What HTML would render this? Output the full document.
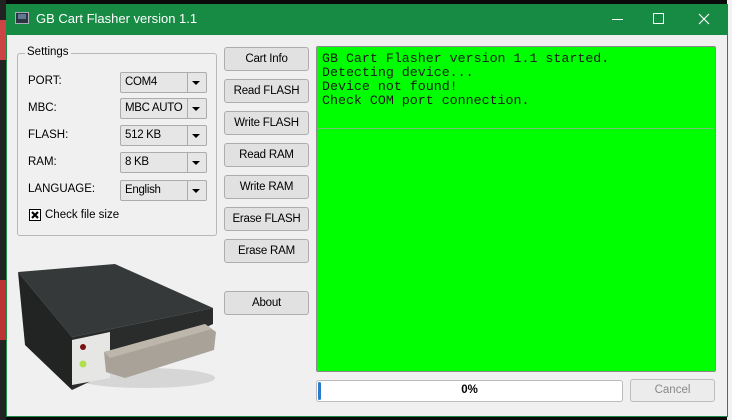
<!DOCTYPE html>
<html><head><meta charset="utf-8"><style>
*{box-sizing:border-box;margin:0;padding:0}
body{width:732px;height:420px;overflow:hidden;background:#0a0a0a;position:relative;font-family:"Liberation Sans",sans-serif;font-size:11.5px;color:#000}
.a{position:absolute}
.win{left:6px;top:4px;width:722px;height:413px;background:#f0f0f0;border:1px solid #1e8a46}
.title{left:6px;top:4px;width:722px;height:31px;background:#178a44;color:#fff;font-size:13px}
.btn{position:absolute;left:224px;width:85px;height:24px;background:#e1e1e1;border:1px solid #adadad;border-radius:3px;text-align:center;line-height:22px;font-size:11.5px;letter-spacing:-0.2px}
.lbl{position:absolute;left:28px;font-size:11.5px}
.cb{position:absolute;left:120px;width:87px;height:21px;background:#e6e6e6;border:1px solid #acacac;border-radius:2px;padding-left:4px;line-height:19px;font-size:11.5px;letter-spacing:-0.3px;white-space:nowrap;overflow:hidden}
.cb:after{content:"";position:absolute;left:66px;top:0;width:1px;height:19px;background:#acacac}
.cb:before{content:"";position:absolute;right:6px;top:8px;border-left:4px solid transparent;border-right:4px solid transparent;border-top:4px solid #000}
</style></head><body>
<div class="a" style="left:0;top:0;width:6px;height:420px;background:#222"></div>
<div class="a" style="left:0;top:20px;width:6px;height:40px;background:#c44"></div>
<div class="a" style="left:0;top:280px;width:6px;height:60px;background:#b33"></div>
<div class="a" style="left:727px;top:0;width:5px;height:420px;background:#f2f2f2"></div>
<div class="a win"></div>
<div class="a title">
 <div class="a" style="left:9px;top:8px;width:14px;height:12px;background:#2b3640;border:1px solid #aab"></div>
 <div class="a" style="left:12px;top:10px;width:8px;height:5px;background:#607890"></div>
 <div class="a" style="left:30px;top:7px;font-size:13px">GB Cart Flasher version 1.1</div>
 <div class="a" style="left:606px;top:15px;width:11px;height:1px;background:#fff"></div>
 <div class="a" style="left:647px;top:9px;width:11px;height:11px;border:1px solid #fff"></div>
 <svg class="a" style="left:692px;top:9px" width="12" height="12"><path d="M1 1L11 11M11 1L1 11" stroke="#fff" stroke-width="1.2"/></svg>
</div>
<div class="a" style="left:17px;top:53px;width:200px;height:183px;border:1px solid #b8b8b8;border-radius:3px"></div>
<div class="a" style="left:25px;top:46px;background:#f0f0f0;padding:0 2px">Settings</div>
<div class="lbl" style="top:75px">PORT:</div><div class="cb" style="top:72px">COM4</div>
<div class="lbl" style="top:102px">MBC:</div><div class="cb" style="top:98px">MBC AUTO</div>
<div class="lbl" style="top:129px">FLASH:</div><div class="cb" style="top:125px">512 KB</div>
<div class="lbl" style="top:156px">RAM:</div><div class="cb" style="top:152px">8 KB</div>
<div class="lbl" style="top:183px">LANGUAGE:</div><div class="cb" style="top:180px">English</div>
<div class="a" style="left:29px;top:209px;width:12px;height:12px;border:1px solid #000;background:#fff"></div>
<svg class="a" style="left:29px;top:209px" width="12" height="12"><path d="M3 3L9 9M9 3L3 9" stroke="#000" stroke-width="2.2"/></svg>
<div class="a" style="left:45px;top:209px">Check file size</div>
<div class="btn" style="top:47px">Cart Info</div>
<div class="btn" style="top:79px">Read FLASH</div>
<div class="btn" style="top:111px">Write FLASH</div>
<div class="btn" style="top:143px">Read RAM</div>
<div class="btn" style="top:175px">Write RAM</div>
<div class="btn" style="top:207px">Erase FLASH</div>
<div class="btn" style="top:239px">Erase RAM</div>
<div class="btn" style="top:291px">About</div>
<svg class="a" style="left:0;top:240px" width="222" height="170">
 <ellipse cx="145" cy="138" rx="70" ry="10" fill="#d6d6d6"/>
 <polygon points="18,32 115,24 213,68 72,97" fill="#363939"/>
 <polygon points="18,32 72,97 72,150 25,105" fill="#222424"/>
 <polygon points="72,97 213,68 213,84 72,150" fill="#2a2c2c"/>
 <polygon points="72,100 110,92 110,138 72,145" fill="#e6e6e4"/>
 <circle cx="83" cy="107" r="3" fill="#7a1010"/>
 <circle cx="83" cy="124" r="3.5" fill="#aee04a"/>
 <polygon points="104,112 205,84 216,92 214,110 125,138 106,132" fill="#a8a298"/>
 <polygon points="104,112 205,84 212,89 110,118" fill="#bcb6ab"/>
</svg>
<div class="a" style="left:316px;top:46px;width:400px;height:326px;background:#00ff00;border:1px solid #8a8a8a;border-radius:2px"></div>
<div class="a" style="left:318px;top:128px;width:396px;height:1px;background:#7ac07a"></div>
<pre class="a" style="left:322px;top:52px;font-family:'Liberation Mono',monospace;font-size:13.3px;line-height:14px;color:#1a1a1a">GB Cart Flasher version 1.1 started.
Detecting device...
Device not found!
Check COM port connection.</pre>
<div class="a" style="left:316px;top:380px;width:307px;height:22px;background:#fff;border:1px solid #bcbcbc;border-radius:3px"></div>
<div class="a" style="left:318px;top:382px;width:3px;height:18px;background:#2a7ad0;border-radius:2px"></div>
<div class="a" style="left:316px;top:384px;width:307px;text-align:center;font-weight:bold">0%</div>
<div class="a" style="left:630px;top:379px;width:85px;height:23px;background:#ececec;border:1px solid #bdbdbd;border-radius:3px;text-align:center;line-height:21px;color:#888">Cancel</div>
</body></html>
